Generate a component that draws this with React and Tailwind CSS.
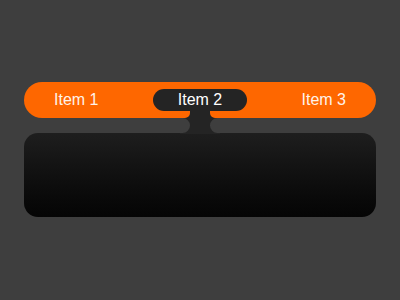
import React from "react";

const items = ["Item 1", "Item 2", "Item 3"];

const Stem = () => (
  <svg
    className="absolute left-1/2 top-full -translate-x-1/2"
    width="40"
    height="23"
    viewBox="0 0 40 23"
  >
    <path
      d="M10 0 L30 0 L30 2 A5 5 0 0 0 35 7 L37.5 7 A7.5 7.5 0 0 0 37.5 22 L40 22 L40 23 L0 23 L0 22 L2.5 22 A7.5 7.5 0 0 0 2.5 7 L5 7 A5 5 0 0 0 10 2 Z"
      fill="#242424"
    />
  </svg>
);

export default function App() {
  return (
    <div
      className="w-[400px] h-[300px] bg-[#3e3e3e] px-6 pt-[82px] flex flex-col"
      style={{ fontFamily: '"Liberation Sans", Arial, sans-serif' }}
    >
      <div className="h-9 rounded-full bg-[#fe6700] flex items-center justify-between px-[30px] text-[16px] text-[#fff3ea]">
        <span>{items[0]}</span>
        <div className="relative w-[94px] h-[22px] rounded-full bg-[#242424] flex items-center justify-center text-white">
          {items[1]}
          <Stem />
        </div>
        <span>{items[2]}</span>
      </div>
      <div className="mt-[15px] h-[84px] rounded-[14px] bg-gradient-to-b from-[#1e1e1e] to-[#050505]" />
    </div>
  );
}
